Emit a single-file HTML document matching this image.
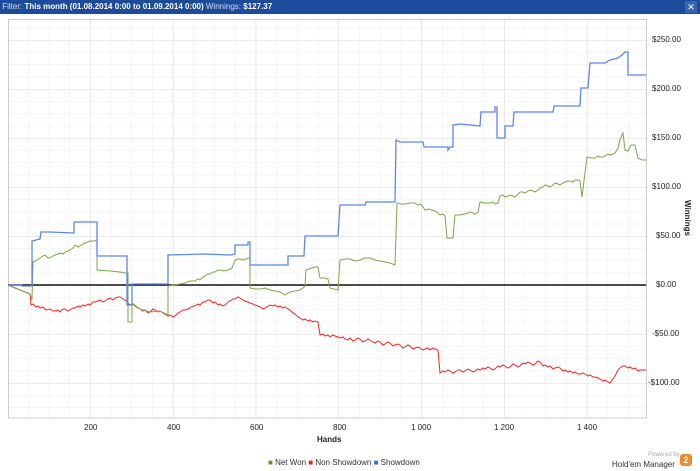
<!DOCTYPE html>
<html><head><meta charset="utf-8"><style>
body{margin:0;width:700px;height:471px;background:#fff;font-family:"Liberation Sans",sans-serif;overflow:hidden;position:relative}
.bar{position:absolute;left:0;top:0;width:700px;height:14px;background:#1d4b9c;color:#fff;font-size:8px;line-height:14px}
.bar span{opacity:.8}
.t{position:absolute;font-size:8px;color:#222}
</style></head><body>
<div class="bar">&nbsp;<span>Filter:</span> <b>This month (01.08.2014 0:00 to 01.09.2014 0:00)</b> <span>Winnings:</span> <b>$127.37</b>
<div style="position:absolute;right:3px;top:1px;width:12px;height:12px;background:#3a64b0;text-align:center;line-height:12px;font-size:9px">✕</div></div>
<svg width="700" height="471" style="position:absolute;left:0;top:0">
<defs>
<pattern id="vm" patternUnits="userSpaceOnUse" x="7.3" y="0" width="20.7" height="10"><line x1="0" y1="0" x2="0" y2="10" stroke="#ececec" stroke-width="1"/></pattern>
<pattern id="hm" patternUnits="userSpaceOnUse" x="0" y="3.25" width="10" height="12.25"><line x1="0" y1="0" x2="10" y2="0" stroke="#ececec" stroke-width="1"/></pattern>
<pattern id="vM" patternUnits="userSpaceOnUse" x="7.3" y="0" width="82.8" height="10"><line x1="0" y1="0" x2="0" y2="10" stroke="#d8d8d8" stroke-width="1"/></pattern>
<pattern id="hM" patternUnits="userSpaceOnUse" x="0" y="40" width="10" height="49"><line x1="0" y1="0" x2="10" y2="0" stroke="#d8d8d8" stroke-width="1"/></pattern>
</defs>
<rect x="8" y="19" width="638" height="399" fill="url(#vm)"/>
<rect x="8" y="19" width="638" height="399" fill="url(#hm)"/>
<rect x="8" y="19" width="638" height="399" fill="url(#vM)"/>
<rect x="8" y="19" width="638" height="399" fill="url(#hM)"/>
<rect x="8.5" y="19.5" width="638" height="398.5" fill="none" stroke="#ccc"/>
<polyline fill="none" stroke="#f22" stroke-width="1" points="8,285 15,288 20,290 25,292 30,294 31,305 33,304 36,307 38,306 40,308 43,307 46,310 50,309 53,311 55,311 58,310 60,312 63,309 65,309 68,311 70,310 73,308 75,308 78,306 80,307 83,305 85,306 88,304 90,305 93,302 95,302 98,301 100,300 103,302 105,301 108,299 110,298 113,300 115,298 118,297 120,297 123,299 125,300 128,303 130,305 133,304 135,306 138,308 140,309 143,311 145,310 148,313 150,312 153,309 155,310 158,312 160,311 163,313 165,314 168,316 170,315 173,317 175,316 178,313 180,312 183,310 185,310 188,309 190,308 193,306 195,306 198,304 200,305 203,302 205,302 208,300 210,300 213,303 215,302 218,305 220,304 223,306 225,305 228,302 230,301 233,299 235,299 238,297 240,298 243,300 245,301 248,302 250,303 253,304 255,305 258,306 260,307 263,309 265,308 268,306 270,305 273,306 275,305 278,307 280,306 283,308 285,307 288,309 290,310 293,313 295,314 298,317 300,318 303,320 305,319 308,321 310,320 313,322 315,321 318,322 320,335 323,334 325,336 328,335 330,337 333,335 335,336 338,337 340,338 343,337 345,339 348,340 350,338 353,341 355,340 358,338 360,339 363,342 365,341 368,339 370,340 373,342 375,343 378,341 380,342 383,345 385,344 388,342 390,343 393,346 395,345 398,344 400,345 403,348 405,347 408,345 410,346 413,349 415,348 418,347 420,348 423,350 425,349 428,348 430,350 433,348 435,349 438,350 440,373 443,371 445,372 448,370 450,371 453,373 455,372 458,370 460,370 463,372 465,371 468,369 470,370 473,372 475,371 478,369 480,370 483,368 485,369 488,367 490,368 493,370 495,369 498,366 500,367 503,365 505,366 508,368 510,367 513,364 515,365 518,367 520,366 523,363 525,364 528,362 530,363 533,365 535,364 538,361 540,362 543,366 545,365 548,367 550,366 553,369 555,368 558,367 560,368 563,371 565,370 568,372 570,371 573,373 575,372 578,374 580,374 583,373 585,374 588,376 590,375 593,377 595,377 598,378 600,379 603,381 605,380 608,382 610,383 613,379 615,376 618,370 620,368 623,366 625,366 628,368 630,367 633,369 635,368 638,371 640,370 646,370"/>
<line x1="8" y1="285" x2="646" y2="285" stroke="#111" stroke-width="1.6"/>
<polyline fill="none" stroke="#7aa84a" stroke-width="1" points="8,285 20,290 30,294 32,300 33,262 37,260 40,258 43,256 45,255 48,258 50,258 53,256 55,255 58,254 60,253 63,254 65,252 68,251 70,250 73,248 75,245 78,247 80,246 83,244 85,243 88,242 90,241 94,241 97,240 97,270 110,271 120,272 125,273 128,273 128,322 132,322 132,303 136,306 140,309 150,312 160,311 168,315 168,286 172,285 175,285 180,284 185,283 190,281 195,281 198,279 200,280 203,277 205,276 208,274 210,274 213,272 215,272 218,270 220,270 224,271 228,270 232,268 235,260 238,259 240,259 244,260 248,258 250,258 250,288 255,289 260,289 265,288 270,290 275,291 280,292 285,295 288,293 290,292 295,291 300,290 303,288 305,286 306,270 309,269 312,268 315,267 318,267 320,278 324,278 328,279 330,288 334,289 338,290 340,260 345,259 350,259 355,261 360,260 365,258 370,258 375,260 380,261 385,262 390,263 395,265 397,203 401,204 405,204 410,203 415,203 418,205 421,204 425,210 428,209 432,210 435,211 437,212 440,215 443,214 445,216 447,238 453,238 455,215 460,215 465,214 468,213 470,212 473,213 475,214 478,212 480,202 485,203 490,203 493,202 495,204 498,203 500,196 503,195 505,197 508,196 510,195 513,196 515,197 518,194 520,192 523,192 525,193 528,191 530,190 533,191 535,192 538,190 540,188 543,187 545,185 548,186 550,187 553,185 555,183 558,184 560,185 563,183 565,182 568,181 570,181 573,182 575,180 578,180 580,181 582,197 587,157 591,158 595,158 598,156 600,157 603,157 605,156 608,154 610,155 613,154 615,153 618,148 620,140 622,135 623,133 625,150 628,151 631,145 635,145 638,158 642,160 646,160"/>
<polyline fill="none" stroke="#5b86f0" stroke-width="1.3" points="8,285 22,285 22,286 32,286 32,241 40,239 41,232 50,232 74,233 74,222 97,222 97,256 127,256 127,305 132,305 132,284 168,284 168,255 205,254 230,255 235,254 235,245 248,245 248,242 250,242 250,265 288,265 288,256 304,256 305,236 338,236 340,205 365,205 366,202 395,202 396,140 400,142 423,142 424,147 448,147 448,150 450,147 453,147 453,125 460,124 480,126 481,112 495,112 495,107 497,107 497,138 505,138 505,126 513,126 514,112 553,112 554,106 580,106 581,88 588,88 590,63 605,63 610,60 618,58 622,55 625,52 628,52 628,75 646,75"/>
</svg>
<div class="t" style="left:652px;top:35px">$250.00</div>
<div class="t" style="left:652px;top:84px">$200.00</div>
<div class="t" style="left:652px;top:133px">$150.00</div>
<div class="t" style="left:652px;top:182px">$100.00</div>
<div class="t" style="left:656px;top:231px">$50.00</div>
<div class="t" style="left:656px;top:280px">$0.00</div>
<div class="t" style="left:652px;top:329px">-$50.00</div>
<div class="t" style="left:648px;top:378px">-$100.00</div>
<div class="t" style="top:200px;transform:rotate(90deg);font-weight:bold;transform-origin:left top;left:692px">Winnings</div>
<div class="t" style="left:84px;top:423px">200</div>
<div class="t" style="left:167px;top:423px">400</div>
<div class="t" style="left:250px;top:423px">600</div>
<div class="t" style="left:333px;top:423px">800</div>
<div class="t" style="left:411px;top:423px">1 000</div>
<div class="t" style="left:494px;top:423px">1 200</div>
<div class="t" style="left:577px;top:423px">1 400</div>
<div class="t" style="left:317px;top:435px;font-weight:bold">Hands</div>
<div class="t" style="left:268px;top:458px;color:#333"><span style="color:#5a9a2a">■</span> Net Won <span style="color:#e22">■</span> Non Showdown <span style="color:#3a6ae8">■</span> Showdown</div>
<div class="t" style="left:648px;top:452px;font-size:6px;color:#aaa">Powered by</div>
<div class="t" style="left:612px;top:460px;color:#333">Hold'em Manager</div>
<div style="position:absolute;left:680px;top:454px;width:12px;height:12px;background:#f08a30;border-radius:3px;color:#fff;font:bold 9px 'Liberation Sans',sans-serif;text-align:center;line-height:12px">2</div>
</body></html>
